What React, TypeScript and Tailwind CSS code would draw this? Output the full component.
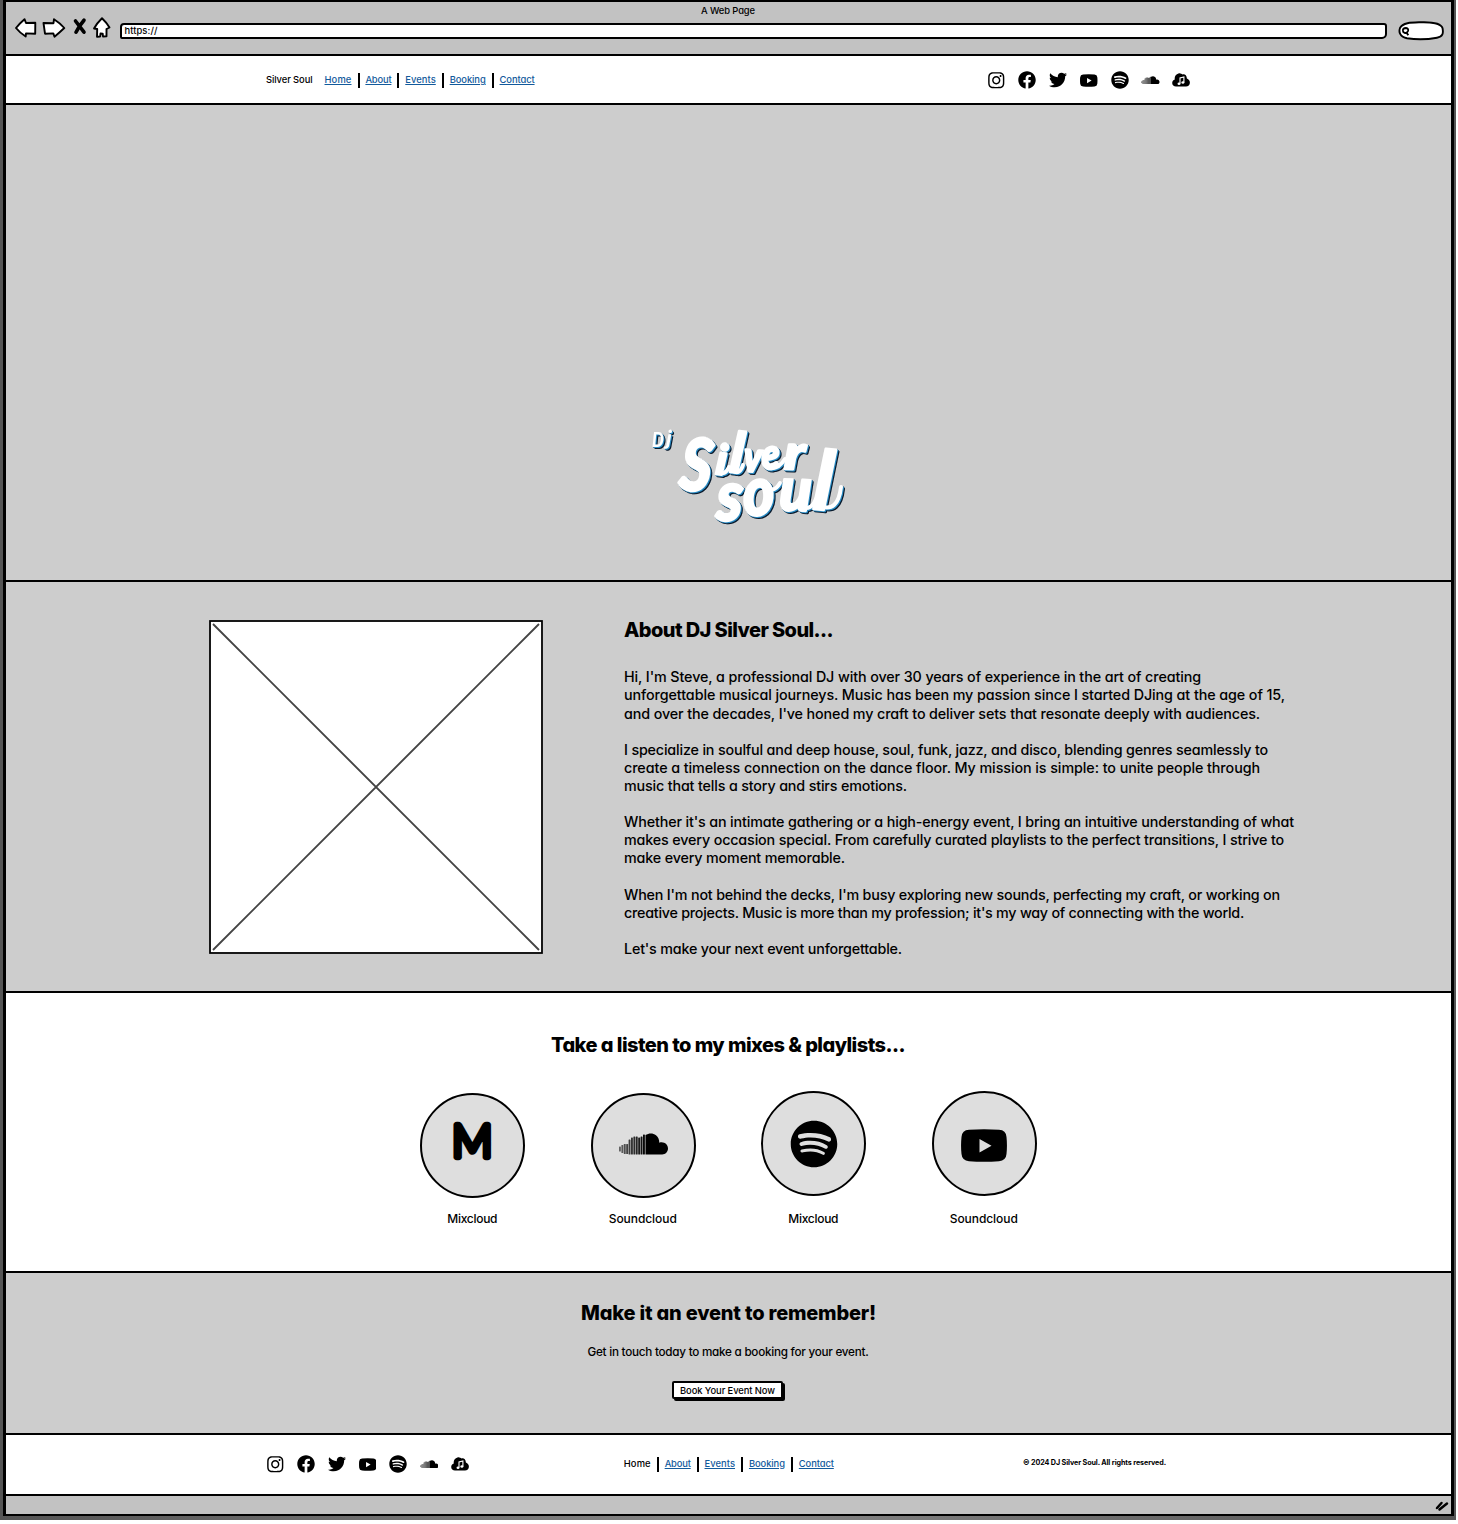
import { useLayoutEffect, useRef, useState } from "react";
import type { ReactNode } from "react";
import { FaFacebook, FaInstagram, FaSpotify, FaTwitter } from "react-icons/fa";

/* One line of text whose tracking is adjusted so that it fills a given width. */
function Fit({ w, className = "", children }: { w: number; className?: string; children: string }) {
  const ref = useRef<HTMLSpanElement>(null);
  const [spacing, setSpacing] = useState(0);
  useLayoutEffect(() => {
    if (!ref.current) return;
    const natural = ref.current.getBoundingClientRect().width;
    setSpacing((w - natural) / children.length);
  }, [w, children]);
  return (
    <span ref={ref} className={`inline-block whitespace-pre ${className}`} style={{ letterSpacing: `${spacing}px` }}>
      {children}
    </span>
  );
}

function YoutubeIcon({ className }: { className: string }) {
  return (
    <svg viewBox="0 0 46 33" className={className}>
      <path
        fillRule="evenodd"
        d="M8 .8Q23-.4 38 .8Q45 1.2 45.5 8Q46.4 16.5 45.5 25Q45 31.5 38 32.2Q23 33.4 8 32.2Q1 31.5.5 25Q-.4 16.5.5 8Q1 1.2 8 .8ZM18.500 10V23.500L30.500 16.700Z"
      />
    </svg>
  );
}

const bars = [
  [0, 5, 0.55],
  [2.4, 8, 0.6],
  [4.8, 10, 0.65],
  [7.2, 10, 0.7],
  [9.6, 15, 0.72],
  [12, 17, 0.76],
  [14.4, 18, 0.8],
  [16.8, 18, 0.84],
  [19.2, 17, 0.88],
  [21.6, 18, 0.92],
  [24, 20, 0.96],
];

function SoundcloudIcon({ className }: { className: string }) {
  return (
    <svg viewBox="0 0 49 22" className={className}>
      {bars.map(([x, h, o]) => (
        <rect key={x} x={x} y={h < 12 ? 16 - h / 2 : 21.5 - h} width="1.9" height={h} rx="0.6" opacity={o} />
      ))}
      <path d="M26.500 2C30-.2 34-.1 37 2.200C39.300 4 40.300 6.700 40.300 9.700C45 8.200 49 11.400 49 15.600C49 19 46.500 21.500 43.200 21.500H26.500Z" />
    </svg>
  );
}

function CloudMusicIcon({ className }: { className: string }) {
  return (
    <svg viewBox="0 0 18 14" className={className}>
      <path d="M4 13.500C1.800 13.500.2 12 .2 10C.2 8.200 1.300 7 2.800 6.600C2.200 3.600 3.800 1 6.500.4C8.400-.1 9.600 1 10.500 1.400C12.500.6 14.800 2.200 14.900 5.400C16.800 6 17.900 7.700 17.900 9.700C17.900 12 16.200 13.500 14 13.500Z" />
      <path d="M8 10.600V5L11.900 3.900V9.400" fill="none" stroke="white" strokeWidth="1.1" />
      <ellipse cx="7" cy="10.700" rx="1.500" ry="1.200" fill="white" />
      <ellipse cx="10.900" cy="9.500" rx="1.500" ry="1.200" fill="white" />
    </svg>
  );
}

function Cell({ children }: { children: ReactNode }) {
  return <div className="flex w-[30.75px] items-center justify-center">{children}</div>;
}

function Socials() {
  return (
    <div className="flex h-5 items-center">
      <Cell><FaInstagram className="size-[18.5px]" /></Cell>
      <Cell><FaFacebook className="size-[18px]" /></Cell>
      <Cell><FaTwitter className="size-[18px]" /></Cell>
      <Cell><YoutubeIcon className="h-[13px] w-[17.5px]" /></Cell>
      <Cell><FaSpotify className="size-[18px]" /></Cell>
      <Cell><SoundcloudIcon className="h-[8.5px] w-[18.5px]" /></Cell>
      <Cell><CloudMusicIcon className="h-[14px] w-[18px]" /></Cell>
    </div>
  );
}

const links: [string, number][] = [
  ["Home", 27],
  ["About", 26],
  ["Events", 30.5],
  ["Booking", 36],
  ["Contact", 35],
];

function NavLinks({ plainFirst = false }: { plainFirst?: boolean }) {
  return (
    <div className="flex items-center text-[9.4px] leading-4">
      {links.map(([label, w], i) => (
        <div key={label} className="flex items-center">
          {i > 0 && <div className="ml-[6px] mr-[5.9px] h-[15px] w-[2px] bg-black" />}
          <Fit w={w} className={plainFirst && i === 0 ? "" : "text-[#125a9c] underline decoration-1 underline-offset-1"}>
            {label}
          </Fit>
        </div>
      ))}
    </div>
  );
}

const paragraphs: [string, number][][] = [
  [
    ["Hi, I'm Steve, a professional DJ with over 30 years of experience in the art of creating", 577],
    ["unforgettable musical journeys. Music has been my passion since I started DJing at the age of 15,", 661],
    ["and over the decades, I've honed my craft to deliver sets that resonate deeply with audiences.", 636],
  ],
  [
    ["I specialize in soulful and deep house, soul, funk, jazz, and disco, blending genres seamlessly to", 644],
    ["create a timeless connection on the dance floor. My mission is simple: to unite people through", 636],
    ["music that tells a story and stirs emotions.", 283],
  ],
  [
    ["Whether it's an intimate gathering or a high-energy event, I bring an intuitive understanding of what", 670],
    ["makes every occasion special. From carefully curated playlists to the perfect transitions, I strive to", 660],
    ["make every moment memorable.", 221],
  ],
  [
    ["When I'm not behind the decks, I'm busy exploring new sounds, perfecting my craft, or working on", 656],
    ["creative projects. Music is more than my profession; it's my way of connecting with the world.", 620],
  ],
  [["Let's make your next event unforgettable.", 278]],
];

/* Letter, x, baseline, size, rotation, horizontal scale */
const wordmark: [string, number, number, number, number, number][] = [
  ["D", 3, 20, 21, 0, 0.8],
  ["j", 17, 18, 21, 4, 1],
  ["S", 29, 62, 73, 6, 0.84],
  ["i", 66, 47, 42, 6, 1],
  ["l", 80, 45, 56, 6, 0.95],
  ["v", 94, 44, 42, 4, 0.85],
  ["e", 113, 42, 42, -2, 0.88],
  ["r", 135, 42, 48, 2, 1.2],
  ["s", 67, 93, 70, 2, 0.92],
  ["o", 95, 89, 68, -3, 0.88],
  ["u", 130, 83, 60, 2, 0.98],
  ["l", 163, 82, 82, 5, 0.95],
];

const flourishes = [
  "M70 45Q76 49 80 40",
  "M84 44Q91 48 94 38",
  "M120 41Q129 43 136 32",
  "M115 58Q124 68 131 56",
  "M153 80Q162 84 167 72",
  "M171 79Q189 86 192 60",
];

function Logo() {
  return (
    <svg
      viewBox="0 0 196 102"
      className="h-[102px] w-[196px] overflow-visible font-['Lato'] font-black italic [filter:drop-shadow(1px_1px_0_#2a8cc4)_drop-shadow(1px_1px_0_#07182b)]"
    >
      {wordmark.map(([c, x, y, size, rot, sx], i) => (
        <text
          key={i}
          transform={`translate(${x} ${y}) rotate(${rot}) scale(${sx} 1)`}
          fontSize={size}
          fill="white"
          stroke="white"
          strokeWidth={size > 30 ? 2.5 : 0}
          strokeLinejoin="round"
        >
          {c}
        </text>
      ))}
      {flourishes.map((d) => (
        <path key={d} d={d} fill="none" stroke="white" strokeWidth="4" strokeLinecap="round" strokeLinejoin="round" />
      ))}
    </svg>
  );
}

function BrowserBar() {
  return (
    <header className="h-14 shrink-0 border-b-2 border-t-2 border-black bg-[#c2c2c2]">
      <div className="flex h-[17px] justify-center pr-[1px]">
        <Fit w={54} className="text-[9.4px] leading-[18px]">A Web Page</Fit>
      </div>
      <div className="flex pl-[9px]">
        <svg viewBox="0 0 98 24" className="-mt-[4.5px] h-6 w-[98px] fill-white stroke-black stroke-[1.9] [stroke-linejoin:round]">
          <path d="M1 13Q5 8 9.500 4.200L11 8L20.300 7.700L20.200 18.700L11 18.400L10.700 21.500Q5 18 1 13Z" />
          <path d="M28.500 8L38.500 8.200L39 4.200Q45 8 49.300 13Q44 18 39.500 21.700L38.300 18.400L30 18.700Z" />
          <path d="M60.500 6L69 17.200M69 5.200Q64 11 61 17.200" className="fill-none stroke-[3.6] [stroke-linecap:round]" />
          <path d="M87 3.200Q92 8 94.500 12.500L91.500 14V21.300L88 21.500L87.700 18.700L85.500 18.500L85.200 21.500L82 21.700L82.200 14L79 13.500Q82 8 87 3.200Z" />
        </svg>
        <div className="ml-[6.5px] mt-[4px] flex h-4 w-[1267.5px] items-center rounded-[4px_3px_5px_2px] border-2 border-black bg-white pl-[3px]">
          <Fit w={33} className="text-[9.4px] leading-3">https://</Fit>
        </div>
        <svg viewBox="0 0 46 20" className="ml-[10.5px] mt-[2px] h-5 w-[46px] fill-white stroke-black stroke-[1.9]">
          <path d="M2 7C5 1 15 1.500 24 1.200C33 1 43 2.500 44.500 7C45.500 12 45 16 39 16.700C28 18.800 17 18.500 9 17.300C2 16 .5 11 2 7Z" />
          <path d="M5 10Q4.500 7 8 7Q10.800 7.500 10 10Q9 12.500 6.500 11.800Q5 11.500 5 10M8.800 12L10.300 14.300" />
        </svg>
      </div>
    </header>
  );
}

const circle = "flex size-[105px] items-center justify-center rounded-full border-2 border-black bg-[#dedede]";

function Mix({ label, w, className = "", children }: { label: string; w: number; className?: string; children: ReactNode }) {
  return (
    <div className="flex h-[136px] w-[105px] flex-col items-center justify-between">
      <div className={`${circle} ${className}`}>{children}</div>
      <Fit w={w} className="mr-[1px] text-[12px] font-medium leading-5">{label}</Fit>
    </div>
  );
}

export default function App() {
  return (
    <div className="h-[1524px] w-[1458px] bg-white font-['Inter',sans-serif] text-black [font-feature-settings:'cv11']">
      <div className="flex h-[1520px] w-[1456px] flex-col bg-gradient-to-r from-[#555] via-[#888] to-[#555] pl-[3px] pr-[2px]">
        <div className="flex h-[1516px] flex-col border-x-[3px] border-b-2 border-black bg-white font-medium">
          <BrowserBar />

          <nav className="flex h-[49px] shrink-0 items-center border-b-2 border-black pl-[260px] pr-[254.5px] pt-px">
            <Fit w={46.5} className="text-[9.4px] leading-4">Silver Soul</Fit>
            <div className="ml-3">
              <NavLinks />
            </div>
            <div className="ml-auto">
              <Socials />
            </div>
          </nav>

          <section className="flex h-[477px] shrink-0 border-b-2 border-black bg-[#cdcdcd] pl-[643px] pt-[322px]">
            <Logo />
          </section>

          <section className="flex h-[411px] shrink-0 border-b-2 border-black bg-[#cdcdcd] pl-[202.5px] pt-[37.5px]">
            <svg viewBox="0 0 334 334" className="size-[334px] bg-white">
              <rect x="1" y="1" width="332" height="332" fill="none" stroke="black" strokeWidth="1.8" />
              <path d="M4 4L330 330M330 4L4 330" stroke="#444" strokeWidth="1.9" />
            </svg>
            <div className="ml-[81.5px] flex flex-col items-start">
              <h2 className="mt-[0.5px] flex h-[20px] items-center">
                <Fit w={209} className="text-[20px] font-extrabold leading-5">About DJ Silver Soul...</Fit>
              </h2>
              <div className="mt-[28.4px] flex flex-col gap-[18.1px] text-[14.3px] leading-[18.1px]">
                {paragraphs.map((lines, i) => (
                  <p key={i} className="flex flex-col items-start">
                    {lines.map(([text, w]) => (
                      <Fit key={text} w={w}>{text}</Fit>
                    ))}
                  </p>
                ))}
              </div>
            </div>
          </section>

          <section className="flex h-[280px] shrink-0 flex-col items-center border-b-2 border-black pt-[41.5px]">
            <h2 className="flex h-5 items-center">
              <Fit w={354} className="mr-px text-[20px] font-extrabold leading-5">{"Take a listen to my mixes & playlists..."}</Fit>
            </h2>
            <div className="mt-[38.5px] flex gap-[65.5px]">
              <Mix label="Mixcloud" w={50}>
                <svg viewBox="0 0 80 80" className="size-20 overflow-visible font-['Lato'] font-light">
                  <text transform="translate(39.3 51.3) scale(.99 1)" textAnchor="middle" fontSize="45" stroke="black" strokeWidth="6.5" strokeLinejoin="round">M</text>
                </svg>
              </Mix>
              <Mix label="Soundcloud" w={68}>
                <SoundcloudIcon className="mt-[-3px] h-[22px] w-[49px]" />
              </Mix>
              <Mix label="Mixcloud" w={50} className="-mt-[2px]">
                <FaSpotify className="size-[48px]" />
              </Mix>
              <Mix label="Soundcloud" w={68} className="-mt-[2px]">
                <YoutubeIcon className="mt-[3px] h-[33px] w-[46px]" />
              </Mix>
            </div>
          </section>

          <section className="flex h-[162px] shrink-0 flex-col items-center border-b-2 border-black bg-[#cdcdcd] pt-[29.5px]">
            <h2 className="flex h-5 items-center">
              <Fit w={295} className="text-[20px] font-extrabold leading-5">Make it an event to remember!</Fit>
            </h2>
            <p className="mt-[19.5px] flex h-5 items-center">
              <Fit w={281} className="mr-px text-[11.7px] leading-5">Get in touch today to make a booking for your event.</Fit>
            </p>
            <button className="mr-[2px] mt-[19px] flex h-[18px] w-[111px] items-center justify-center rounded-[2px] border-2 border-black bg-white pt-px shadow-[2px_2px_0_black]">
              <Fit w={95} className="text-[9.4px] leading-3">Book Your Event Now</Fit>
            </button>
          </section>

          <footer className="flex h-[61px] shrink-0 items-center border-b-2 border-black pb-px pl-[254px] pr-[285px]">
            <Socials />
            <div className="ml-[148.5px]">
              <NavLinks plainFirst />
            </div>
            <Fit w={143} className="mb-[2px] ml-auto text-[7.2px] font-bold leading-3">© 2024 DJ Silver Soul. All rights reserved.</Fit>
          </footer>

          <div className="flex grow justify-end bg-[#c2c2c2] pr-[2px] pt-[4px]">
            <svg viewBox="0 0 14 12" className="h-3 w-[14px] stroke-black stroke-[2.5] [stroke-linecap:round]">
              <path d="M2 8L6.500 3M4.500 9.500L12 3.500" />
            </svg>
          </div>
        </div>
      </div>
    </div>
  );
}
